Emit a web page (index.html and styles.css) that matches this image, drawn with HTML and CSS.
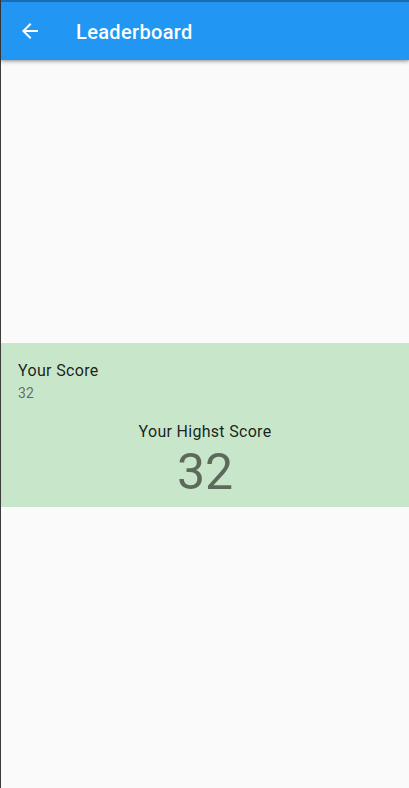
FILE: index.html
```html
<!DOCTYPE html>
<html lang="en">
<head>
<meta charset="utf-8">
<title>Leaderboard</title>
<link rel="stylesheet" href="styles.css">
</head>
<body>
<div class="screen">
  <header class="appbar">
    <button class="back" aria-label="Back">
      <svg width="24" height="24" viewBox="0 0 24 24"><path fill="#fff" d="M20 11H7.83l5.59-5.59L12 4l-8 8 8 8 1.41-1.41L7.83 13H20v-2z"/></svg>
    </button>
    <h1 class="title">Leaderboard</h1>
  </header>
  <main class="content">
    <section class="card">
      <div class="tile">
        <div class="tile-title">Your Score</div>
        <div class="tile-sub">32</div>
      </div>
      <div class="best-label">Your Highst Score</div>
      <div class="best-value">32</div>
    </section>
  </main>
</div>
</body>
</html>
```
FILE: styles.css
```css
html, body {
  margin: 0;
  padding: 0;
}
body {
  font-family: Roboto, "Noto Sans", sans-serif;
  background: #fafafa;
}
.screen {
  height: 788px;
  display: flex;
  flex-direction: column;
  border-left: 1px solid #3c3c3c;
  background: #fafafa;
  box-sizing: border-box;
}
.appbar {
  position: relative;
  z-index: 2;
  height: 58px;
  border-top: 2px solid #1c6cb3;
  background: #2196f3;
  display: flex;
  align-items: center;
  box-shadow: 0 2px 4px rgba(0,0,0,0.25), 0 1px 2px rgba(0,0,0,0.15);
  flex: none;
}
.back {
  width: 24px;
  height: 24px;
  margin-left: 17px;
  padding: 0;
  border: 0;
  background: none;
  display: flex;
}
.title {
  margin: 2px 0 0 34px;
  font-size: 20px;
  font-weight: 500;
  color: #fff;
  letter-spacing: 0.35px;
}
.content {
  flex: 1;
  display: flex;
  flex-direction: column;
  justify-content: center;
  padding-top: 2px;
}
.card {
  background: #c8e6c9;
  height: 164px;
  box-sizing: border-box;
  padding-top: 16px;
}
.tile {
  padding: 0 16px 0 17px;
}
.tile-title {
  font-size: 16px;
  line-height: 24px;
  letter-spacing: 0.35px;
  color: rgba(0,0,0,0.87);
}
.tile-sub {
  font-size: 14px;
  line-height: 20px;
  letter-spacing: 0.25px;
  color: rgba(0,0,0,0.54);
}
.best-label {
  margin-top: 17px;
  text-align: center;
  font-size: 16px;
  line-height: 24px;
  letter-spacing: 0.3px;
  color: rgba(0,0,0,0.87);
}
.best-value {
  text-align: center;
  font-size: 50px;
  line-height: 56px;
  color: rgba(0,0,0,0.54);
}
```
